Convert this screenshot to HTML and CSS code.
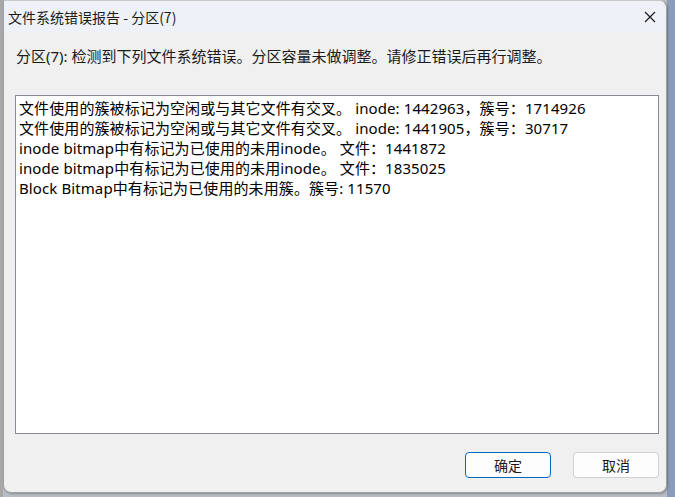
FILE: index.html
```html
<!DOCTYPE html>
<html lang="zh-CN">
<head>
<meta charset="utf-8">
<link rel="stylesheet" href="styles.css">
</head>
<body>
<div class="desktop">
  <div class="window">
    <div class="titlebar">
      <span class="title">文件系统错误报告 - 分区(7)</span>
      <span class="close">
        <svg width="12" height="12" viewBox="0 0 12 12"><path d="M1 1 L11 11 M11 1 L1 11" stroke="#1a1a1a" stroke-width="1.2" fill="none"/></svg>
      </span>
    </div>
    <div class="content">
      <p class="message">分区(7): 检测到下列文件系统错误。分区容量未做调整。请修正错误后再行调整。</p>
      <div class="listbox">
        <div class="line">文件使用的簇被标记为空闲或与其它文件有交叉。 inode: 1442963，簇号：1714926</div>
        <div class="line">文件使用的簇被标记为空闲或与其它文件有交叉。 inode: 1441905，簇号：30717</div>
        <div class="line">inode bitmap中有标记为已使用的未用inode。 文件：1441872</div>
        <div class="line">inode bitmap中有标记为已使用的未用inode。 文件：1835025</div>
        <div class="line">Block Bitmap中有标记为已使用的未用簇。簇号: 11570</div>
      </div>
      <div class="buttons">
        <button class="btn primary">确定</button>
        <button class="btn">取消</button>
      </div>
    </div>
  </div>
</div>
</body>
</html>
```
FILE: styles.css
```css
html, body {
  margin: 0;
  padding: 0;
  width: 675px;
  height: 497px;
  overflow: hidden;
}
body {
  font-family: "Noto Sans", "Noto Sans CJK SC", sans-serif;
  color: #1a1a1a;
}
.desktop {
  width: 675px;
  height: 497px;
  background: linear-gradient(90deg, #a8a8a8 0, #a8a8a8 3px, #b8bcc4 3px, #b8bcc4 667px, #8a9cb8 667px);
  padding: 0 8px 4px 3px;
  box-sizing: border-box;
}
.window {
  width: 664px;
  height: 493px;
  box-sizing: border-box;
  border: 1px solid #a0a0a0;
  border-top-color: #c8c8c8;
  border-radius: 0 8px 8px 8px;
  background: #f0f0f0;
  overflow: hidden;
  display: flex;
  flex-direction: column;
  box-shadow: 1px 1px 2px rgba(0,0,0,0.25);
}
.titlebar {
  height: 31px;
  flex: none;
  background: #eef2f8;
  display: flex;
  align-items: center;
  justify-content: space-between;
  padding: 0 0 0 4px;
}
.title {
  font-family: "Noto Sans CJK SC", sans-serif;
  font-size: 14px;
  color: #1a1a1a;
}
.close {
  width: 32px;
  height: 31px;
  display: flex;
  align-items: center;
  justify-content: center;
}
.content {
  flex: 1;
  display: flex;
  flex-direction: column;
  padding: 0 7px 0 11px;
}
.message {
  margin: 14px 0 0 1px;
  font-size: 15px;
  line-height: 20px;
  height: 20px;
  white-space: nowrap;
}
.listbox {
  margin-top: 29px;
  height: 339px;
  box-sizing: border-box;
  background: #ffffff;
  border: 1px solid #8a8a94;
  padding: 0 0 0 3px;
}
.line {
  font-size: 15px;
  line-height: 20px;
  height: 20px;
  letter-spacing: 0.1px;
  white-space: nowrap;
  color: #000;
}
.listbox .line:first-child {
  margin-top: 2px;
}
.buttons {
  display: flex;
  justify-content: flex-end;
  gap: 22px;
  margin-top: 18px;
}
.btn {
  width: 86px;
  height: 26px;
  box-sizing: border-box;
  border: 1px solid #d0d0d0;
  border-radius: 4px;
  background: #fdfdfd;
  font-family: "Noto Sans CJK SC", sans-serif;
  font-size: 14px;
  color: #1a1a1a;
  padding: 0;
}
.btn.primary {
  border-color: #0067c0;
}
```
